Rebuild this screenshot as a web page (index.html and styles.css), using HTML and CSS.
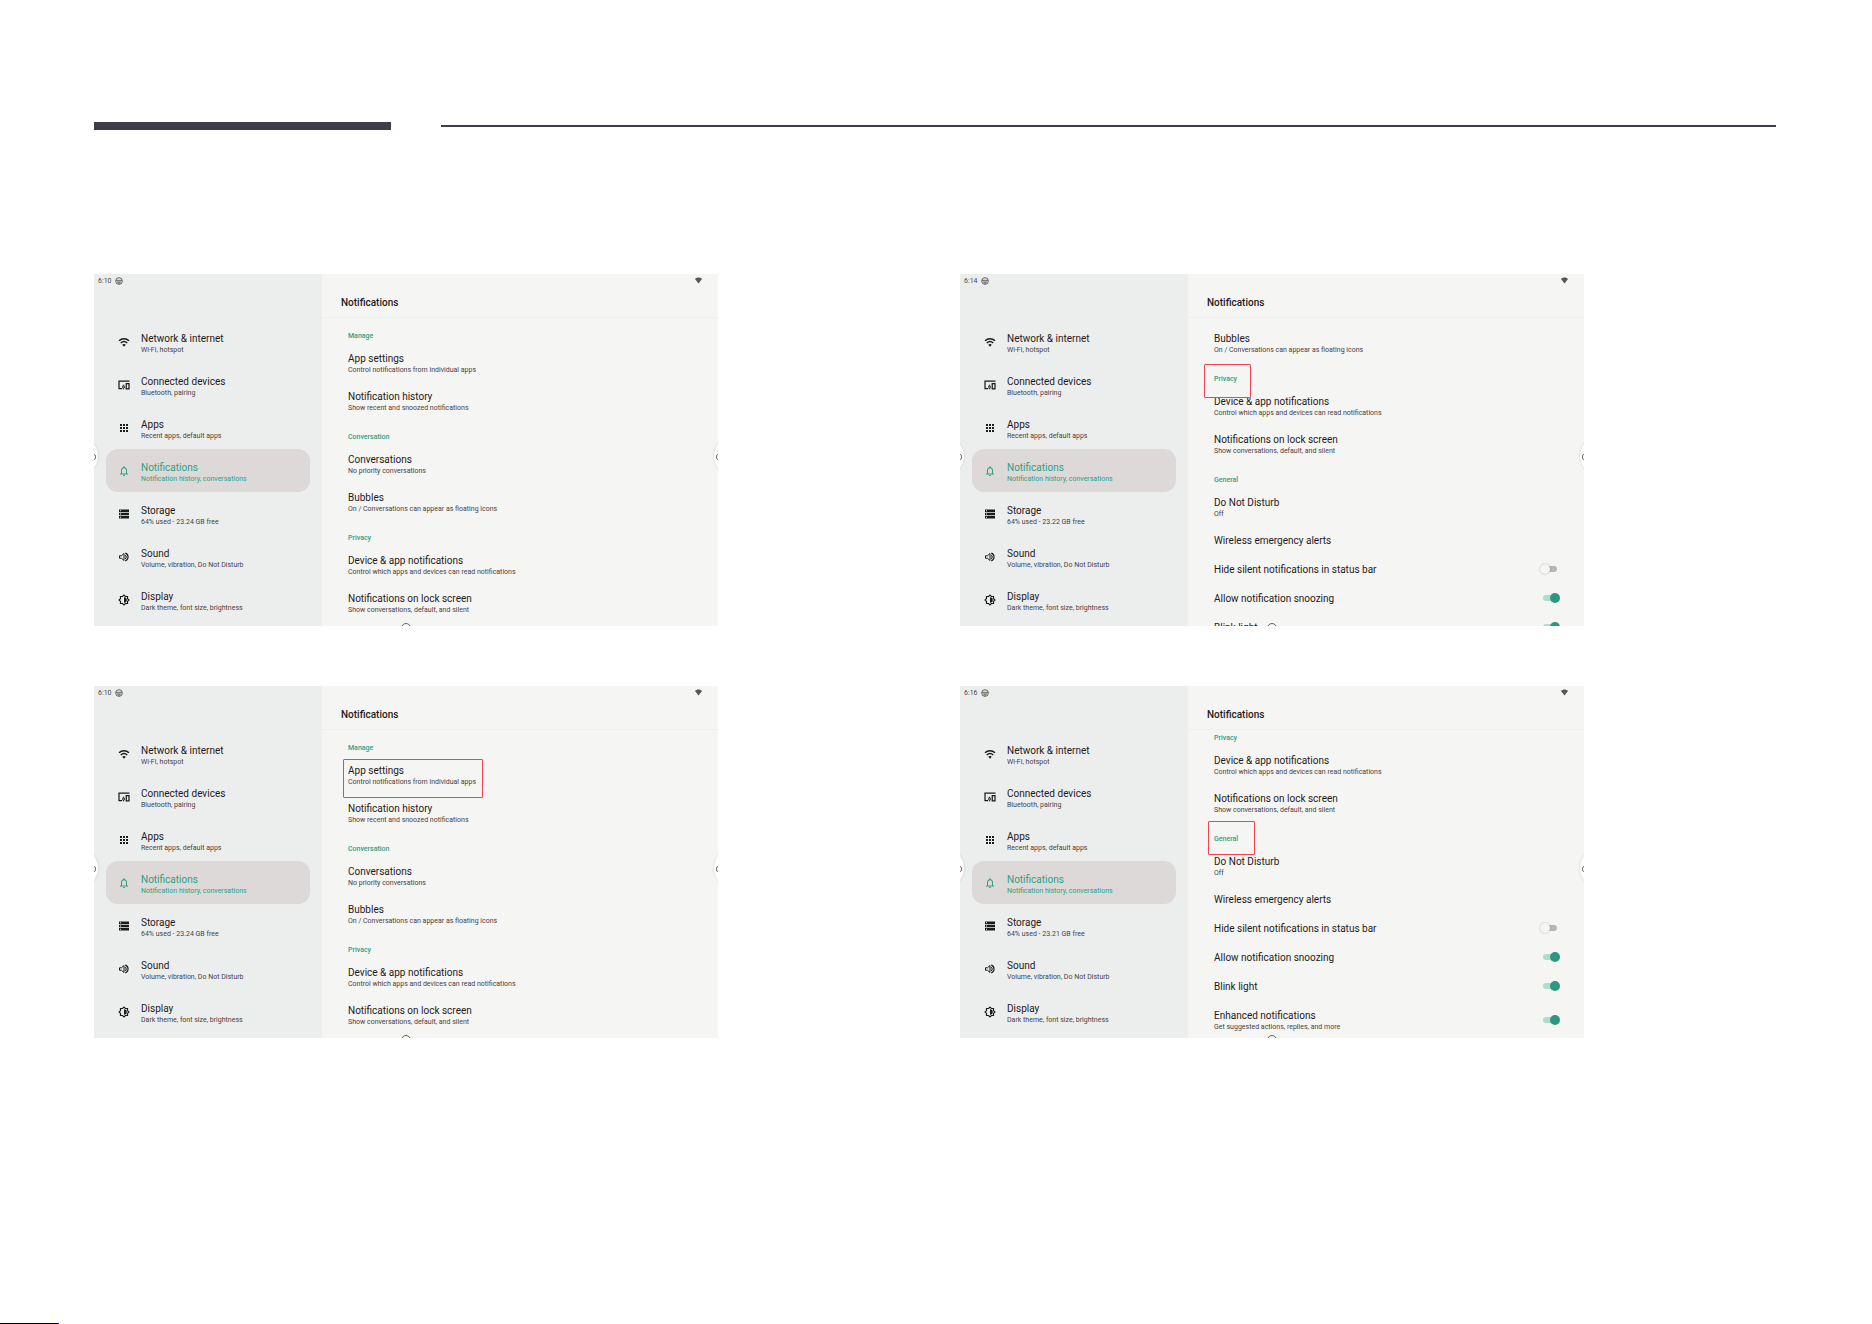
FILE: index.html
```html
<!DOCTYPE html>
<html lang="en">
<head>
  <meta charset="UTF-8">
  <meta name="viewport" content="width=device-width, initial-scale=1.0">
  <title>Notifications</title>
  <link rel="stylesheet" href="styles.css">
</head>
<body>
  <!-- Icon set, used by script.js -->
  <svg class="icon-defs" aria-hidden="true">
    <symbol id="icon-wifi" viewBox="0 0 24 24">
      <path d="M2 9.500c5.800-5.400 14.200-5.400 20 0M5.500 14c3.800-3.400 9.200-3.400 13 0" fill="none" stroke="currentColor" stroke-width="3"/>
      <path d="M8.500 17.500c2-1.700 5-1.700 7 0L12 21.500z"/>
    </symbol>
    <symbol id="icon-devices" viewBox="0 0 24 24">
      <path d="M23 4H2v15h6M2 3v17" fill="none" stroke="currentColor" stroke-width="2.500"/>
      <circle cx="11" cy="16" r="2" fill="none" stroke="currentColor" stroke-width="2"/>
      <path d="M9.500 11.500h3v2h-3zM9.500 18.500h3v2h-3z"/>
      <path d="M16.500 9h5.500v10.500h-5.500z" fill="none" stroke="currentColor" stroke-width="2.500"/>
    </symbol>
    <symbol id="icon-apps" viewBox="0 0 24 24">
      <path d="M4 4h4v4H4zM10 4h4v4h-4zM16 4h4v4h-4zM4 10h4v4H4zM10 10h4v4h-4zM16 10h4v4h-4zM4 16h4v4H4zM10 16h4v4h-4zM16 16h4v4h-4z"/>
    </symbol>
    <symbol id="icon-bell" viewBox="0 0 24 24">
      <path d="M12 22c1.100 0 2-.9 2-2h-4c0 1.100.9 2 2 2zm6-6v-5c0-3.100-1.600-5.600-4.500-6.300V4a1.500 1.500 0 0 0-3 0v.7C7.600 5.400 6 7.900 6 11v5l-2 2v1h16v-1zm-2 1H8v-6c0-2.500 1.500-4.500 4-4.500s4 2 4 4.500z"/>
    </symbol>
    <symbol id="icon-storage" viewBox="0 0 24 24">
      <path fill-rule="evenodd" d="M2 21h20v-5H2zm2-3.500h2v2H4zM2 3v5h20V3zm4 3.500H4v-2h2zM2 14.500h20v-5H2zm2-3.500h2v2H4z"/>
    </symbol>
    <symbol id="icon-sound" viewBox="0 0 24 24">
      <path d="M3 9.500v5h4l5 4.500V5L7 9.500z" fill="none" stroke="currentColor" stroke-width="2"/>
      <path d="M14.500 8.500c2.500 1.500 2.500 5.500 0 7M14.500 4.300c7.500 2 7.500 13.400 0 15.400" fill="none" stroke="currentColor" stroke-width="2.200"/>
    </symbol>
    <symbol id="icon-display" viewBox="0 0 24 24">
      <path d="M12 2.200L14.900 5H19v4.100l2.900 2.900-2.900 2.900V19h-4.100L12 21.800 9.100 19H5v-4.100L2.100 12 5 9.100V5h4.100z" fill="none" stroke="currentColor" stroke-width="2.400"/>
      <path d="M12 6.500v11a5.500 5.500 0 0 0 0-11z"/>
    </symbol>
    <symbol id="icon-status" viewBox="0 0 24 24">
      <circle cx="12" cy="12" r="10" fill="none" stroke="currentColor" stroke-width="2.500"/>
      <path d="M3 10h18M6 15h12M12 15v7" fill="none" stroke="currentColor" stroke-width="2.500"/>
    </symbol>
    <symbol id="icon-signal" viewBox="0 0 24 24">
      <path d="M12 2C7.300 2 3.100 3.900 0 7l12 15L24 7c-3.100-3.100-7.300-5-12-5z"/>
    </symbol>
  </svg>

  <header class="page-header">
    <div class="bar-thick"></div>
    <div class="bar-thin"></div>
  </header>

  <main class="screens" id="screens"></main>

  <footer class="page-footer"></footer>

  <script src="script.js"></script>
</body>
</html>
```
FILE: styles.css
```css
* {
    box-sizing: border-box;
}

body {
    margin: 0;
    min-height: 100vh;
    display: flex;
    flex-direction: column;
    background: #fff;
    color: #1f1a1a;
    font-family: Roboto, "Liberation Sans", sans-serif;
    font-size: 10px;
    line-height: 12px;
}

a {
    color: inherit;
    text-decoration: none;
}

h2, h3, ul {
    margin: 0;
    padding: 0;
    font: inherit;
    list-style: none;
}

.icon-defs {
    display: none;
}

.icon {
    width: 12px;
    height: 12px;
    fill: currentColor;
}

/* Page rules */
.page-header {
    display: flex;
    align-items: center;
    gap: 50px;
    padding: 122px 96px 0 94px;
}

.bar-thick {
    flex: 2 1 0;
    height: 8px;
    background: #3f3c4b;
}

.bar-thin {
    flex: 9 1 0;
    height: 2px;
    background: #3f3c4b;
}

.screens {
    display: grid;
    grid-template-columns: 1fr 1fr;
    gap: 60px 50px;
    padding: 144px 96px 60px 94px;
}

.page-footer {
    width: 59px;
    height: 1px;
    margin-top: auto;
    background: #000;
    border-right: 1px solid #2400c8;
}

/* One tablet screen */
.screen {
    position: relative;
    display: grid;
    grid-template-columns: 228px 1fr;
    width: 100%;
    max-width: 624px;
    aspect-ratio: 624 / 352;
    overflow: hidden;
    background: #f5f5f4;
}

.sidebar {
    min-height: 0;
    padding: 0 12px;
    background: #eceeee;
}

.status {
    display: flex;
    align-items: center;
    gap: 3px;
    height: 13px;
    margin: 0 -8px 33px;
    color: #4c4646;
    font-size: 7px;
}

.status .icon {
    width: 8px;
    height: 8px;
}

.nav-item {
    display: flex;
    gap: 11px;
    height: 43px;
    padding: 13px 12px 0;
    border-radius: 12px;
}

.nav-item .icon {
    margin-top: 3px;
}

.nav-item.active {
    background: #dcd9d8;
    color: #2fa084;
}

.title {
    display: block;
    white-space: nowrap;
}

.summary {
    display: block;
    color: #4a3f3f;
    font-size: 7px;
    line-height: 10px;
    white-space: nowrap;
}

.active .summary {
    color: inherit;
}

/* Right pane */
.content {
    min-height: 0;
    overflow: hidden;
}

.content-header {
    display: flex;
    align-items: center;
    justify-content: space-between;
    height: 44px;
    padding: 0 16px 0 19px;
    border-bottom: 1px solid #eeefef;
}

.content-header h2 {
    padding-top: 15px;
    font-weight: 500;
}

.content-header .icon {
    align-self: flex-start;
    width: 7px;
    height: 7px;
    margin-top: 3px;
    color: #5a5555;
}

.list {
    padding: 2px 24px 0 26px;
}

.list.bubbles-top {
    padding-top: 7px;
}

/* scrolled so that the first category touches the header */
.list.scrolled {
    margin-top: -8px;
    padding-top: 0;
}

.category {
    position: relative;
    height: 25px;
    padding-top: 11px;
    color: #2fa084;
    font-size: 7px;
    font-weight: 500;
    line-height: 10px;
}

.item {
    position: relative;
    display: flex;
    align-items: flex-start;
    justify-content: space-between;
    height: 38px;
    padding-top: 8px;
}

.item.single {
    height: 29px;
}

/* Switch */
.switch {
    appearance: none;
    position: relative;
    width: 20px;
    height: 10px;
    margin: 0;
}

.item:not(.single) .switch {
    margin-top: 5px;
}

.switch::before {
    content: "";
    position: absolute;
    top: 2px;
    left: 3px;
    width: 14px;
    height: 6px;
    border-radius: 3px;
    background: #b9b5b4;
}

.switch::after {
    content: "";
    position: absolute;
    top: 0;
    left: 0;
    width: 10px;
    height: 10px;
    border-radius: 50%;
    background: #f5f5f5;
    box-shadow: 0 0 2px rgba(0, 0, 0, 0.3);
}

.switch:checked::before {
    background: #aadfce;
}

.switch:checked::after {
    left: 10px;
    background: #2f9682;
    box-shadow: none;
}

/* Red frame around the described entry */
.highlight {
    position: absolute;
    border: 1px solid #f04452;
    border-radius: 1px;
    pointer-events: none;
    z-index: 1;
}

.highlight-item {
    top: 2px;
    left: -5px;
    width: 140px;
    height: 39px;
}

.highlight-privacy {
    top: 1px;
    left: -10px;
    width: 47px;
    height: 34px;
}

.highlight-general {
    top: -2px;
    left: -6px;
    width: 47px;
    height: 34px;
}

/* Handles that stick out from the screen edges */
.handle {
    position: absolute;
    top: 163px;
    width: 38px;
    height: 38px;
    border-radius: 50%;
    background: #fff;
    box-shadow: 0 0 3px rgba(0, 0, 0, 0.15);
}

.handle::before {
    content: "";
    position: absolute;
    top: 17px;
    width: 4px;
    height: 4px;
    border: 1px solid #777;
    border-radius: 2px;
}

.handle-left {
    left: -34px;
}

.handle-left::before {
    right: 2px;
}

.handle-right {
    right: -34px;
}

.handle-right::before {
    left: 2px;
}

.home-mark {
    position: absolute;
    bottom: -7px;
    left: 50%;
    width: 10px;
    height: 10px;
    margin-left: -5px;
    border: 1px solid #6a6565;
    border-radius: 50%;
}
```
FILE: script.js
```js
function icon(name) {
  return `<svg class="icon" aria-hidden="true"><use href="#icon-${name}"/></svg>`;
}

function navItems(free) {
  return [
    ['wifi', 'Network & internet', 'Wi-Fi, hotspot'],
    ['devices', 'Connected devices', 'Bluetooth, pairing'],
    ['apps', 'Apps', 'Recent apps, default apps'],
    ['bell', 'Notifications', 'Notification history, conversations'],
    ['storage', 'Storage', `64% used - ${free} GB free`],
    ['sound', 'Sound', 'Volume, vibration, Do Not Disturb'],
    ['display', 'Display', 'Dark theme, font size, brightness']
  ];
}

// list entries shared by the screens
const bubbles = { title: 'Bubbles', summary: 'On / Conversations can appear as floating icons' };
const privacy = [
  { title: 'Device & app notifications', summary: 'Control which apps and devices can read notifications' },
  { title: 'Notifications on lock screen', summary: 'Show conversations, default, and silent' }
];
const general = [
  { title: 'Do Not Disturb', summary: 'Off' },
  { title: 'Wireless emergency alerts' },
  { title: 'Hide silent notifications in status bar', on: false },
  { title: 'Allow notification snoozing', on: true },
  { title: 'Blink light', on: true }
];

function manageList(highlight) {
  return [
    { category: 'Manage' },
    { title: 'App settings', summary: 'Control notifications from individual apps', highlight: highlight },
    { title: 'Notification history', summary: 'Show recent and snoozed notifications' },
    { category: 'Conversation' },
    { title: 'Conversations', summary: 'No priority conversations' },
    bubbles,
    { category: 'Privacy' },
    ...privacy
  ];
}

const screens = [
  { time: '6:10', free: '23.24', list: manageList() },
  {
    time: '6:14', free: '23.22', listClass: 'bubbles-top',
    list: [bubbles, { category: 'Privacy', highlight: 'privacy' }, ...privacy, { category: 'General' }, ...general]
  },
  { time: '6:10', free: '23.24', list: manageList('item') },
  {
    time: '6:16', free: '23.21', listClass: 'scrolled',
    list: [
      { category: 'Privacy' }, ...privacy,
      { category: 'General', highlight: 'general' }, ...general,
      { title: 'Enhanced notifications', summary: 'Get suggested actions, replies, and more', on: true }
    ]
  }
];

function escapeText(text) {
  return text.replace(/&/g, '&amp;');
}

function texts(title, summary) {
  return `<span><span class="title">${escapeText(title)}</span>` +
    (summary ? `<span class="summary">${escapeText(summary)}</span>` : '') + '</span>';
}

function renderEntry(entry, id) {
  const frame = entry.highlight ? `<span class="highlight highlight-${entry.highlight}"></span>` : '';
  if (entry.category) {
    return `<li><h3 class="category">${entry.category}${frame}</h3></li>`;
  }
  const cls = entry.summary ? 'item' : 'item single';
  if (entry.on !== undefined) {
    return `<li><label class="${cls}" for="${id}">${texts(entry.title, entry.summary)}` +
      `<input type="checkbox" class="switch" id="${id}"${entry.on ? ' checked' : ''}></label></li>`;
  }
  return `<li><a class="${cls}" href="#">${texts(entry.title, entry.summary)}${frame}</a></li>`;
}

function renderScreen(screen, n) {
  const nav = navItems(screen.free).map(([name, title, summary]) =>
    `<a class="nav-item${name === 'bell' ? ' active' : ''}" href="#">${icon(name)}${texts(title, summary)}</a>`
  ).join('');
  const list = screen.list.map((entry, i) => renderEntry(entry, `switch-${n}-${i}`)).join('');

  return `
    <section class="screen">
      <nav class="sidebar">
        <div class="status"><span>${screen.time}</span>${icon('status')}</div>
        ${nav}
      </nav>
      <div class="content">
        <div class="content-header"><h2>Notifications</h2>${icon('signal')}</div>
        <ul class="list ${screen.listClass || ''}">${list}</ul>
      </div>
      <span class="handle handle-left"></span>
      <span class="handle handle-right"></span>
      <span class="home-mark"></span>
    </section>`;
}

document.getElementById('screens').innerHTML = screens.map(renderScreen).join('');
```
